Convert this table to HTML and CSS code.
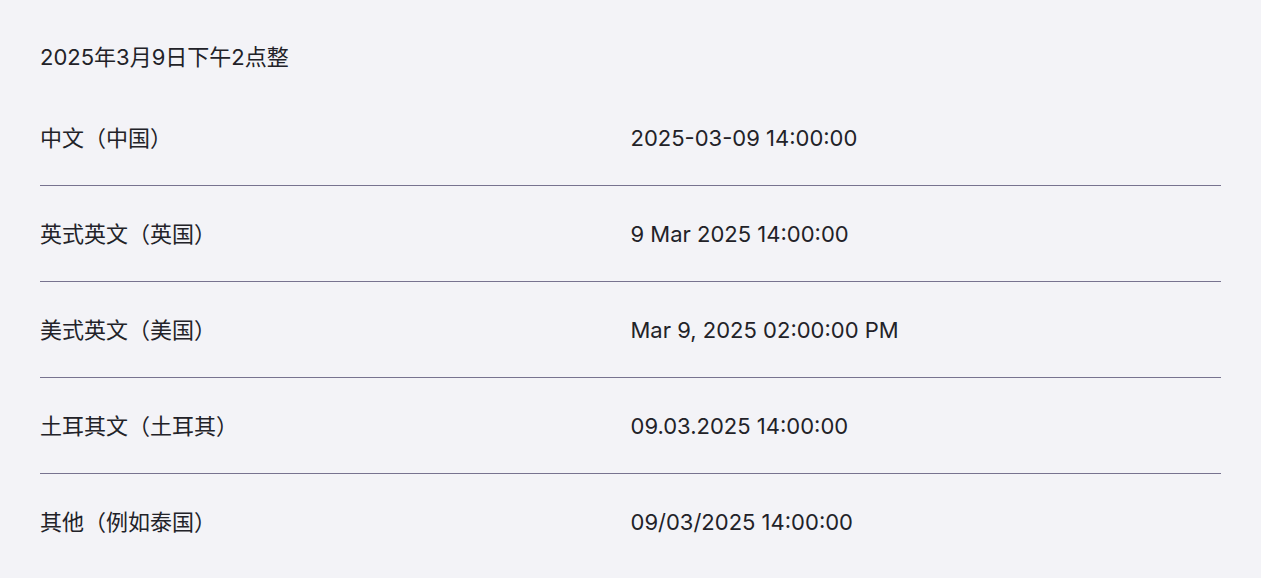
FILE: index.html
```html
<!DOCTYPE html>
<html lang="zh">
<head>
<meta charset="utf-8">
<link rel="stylesheet" href="styles.css">
</head>
<body>
<div class="page">
  <div class="title">2025年3月9日下午2点整</div>
  <div class="list">
    <div class="row"><div class="label">中文（中国）</div><div class="value">2025-03-09 14:00:00</div></div>
    <div class="row"><div class="label">英式英文（英国）</div><div class="value">9 Mar 2025 14:00:00</div></div>
    <div class="row"><div class="label">美式英文（美国）</div><div class="value">Mar 9, 2025 02:00:00 PM</div></div>
    <div class="row"><div class="label">土耳其文（土耳其）</div><div class="value">09.03.2025 14:00:00</div></div>
    <div class="row last"><div class="label">其他（例如泰国）</div><div class="value">09/03/2025 14:00:00</div></div>
  </div>
</div>
</body>
</html>
```
FILE: styles.css
```css
html, body {
  margin: 0;
  padding: 0;
  background: #f3f3f7;
}
body {
  font-family: Inter, "Noto Sans CJK SC", sans-serif;
  font-size: 22px;
  color: #222228;
}
.page {
  padding: 44px 40px 0 40px;
}
.title {
  line-height: 26px;
  margin-bottom: 20px;
}
.row {
  display: grid;
  grid-template-columns: 1fr 1fr;
  line-height: 26px;
  padding: 35px 0 34px;
  border-bottom: 1px solid #77738f;
}
.row.last {
  border-bottom: none;
}
```
